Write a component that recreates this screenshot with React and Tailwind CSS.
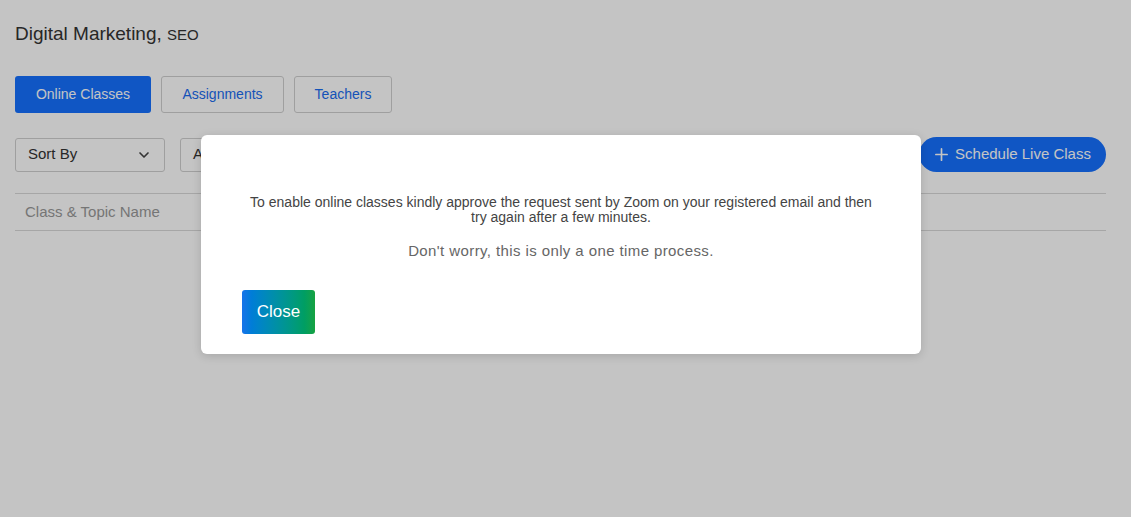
import React from 'react';

const App = () => {
  return (
    <div className="relative min-h-screen h-[517px] bg-white font-['Liberation_Sans',Arial,sans-serif] overflow-hidden">
      {/* Page underneath */}
      <div className="px-[15px] pt-[22px]">
        <h1 className="text-[19px] text-[#333] leading-6">
          Digital Marketing, <span className="text-[15px]">SEO</span>
        </h1>

        <div className="flex gap-[10px] mt-[29px]">
          <button className="w-[136px] h-[37px] rounded-[3px] bg-[#1671ff] text-white text-[14px]">Online Classes</button>
          <button className="w-[123px] h-[37px] rounded-[3px] border border-[#cfcfcf] text-[#1a6cf0] text-[14px]">Assignments</button>
          <button className="w-[98px] h-[37px] rounded-[3px] border border-[#cfcfcf] text-[#1a6cf0] text-[14px]">Teachers</button>
        </div>

        <div className="flex items-center justify-between mt-[24px] pr-[10px]">
          <div className="flex gap-[15px]">
            <div className="w-[150px] h-[34px] rounded-[3px] border border-[#cfcfcf] flex items-center justify-between px-[12px] text-[15px] text-[#333]">
              <span>Sort By</span>
              <svg className="w-4 h-4 text-[#444]" fill="none" stroke="currentColor" viewBox="0 0 24 24">
                <path strokeLinecap="round" strokeLinejoin="round" strokeWidth={2.5} d="M6 9l6 6 6-6" />
              </svg>
            </div>
            <div className="w-[150px] h-[34px] rounded-[3px] border border-[#cfcfcf] flex items-center px-[12px] text-[15px] text-[#333]">
              All
            </div>
          </div>
          <button className="w-[187px] h-[35px] rounded-full bg-[#1671ff] text-white text-[15px] flex items-center justify-center gap-[6px]">
            <svg className="w-[15px] h-[15px]" fill="none" stroke="currentColor" viewBox="0 0 16 16">
              <path strokeLinecap="round" strokeWidth={1.8} d="M8 2v12M2 8h12" />
            </svg>
            Schedule Live Class
          </button>
        </div>

        <div className="mt-[21px] mr-[10px] border-t border-b border-[#d8d8d8] h-[38px] flex items-center px-[10px] text-[15px] text-[#999]">
          Class &amp; Topic Name
        </div>
      </div>

      {/* Overlay */}
      <div className="absolute inset-0 bg-black/[0.23]" />

      {/* Modal */}
      <div className="absolute left-[201px] top-[135px] w-[720px] h-[219px] bg-white rounded-[6px] shadow-[0_2px_10px_rgba(0,0,0,0.15)] px-[41px] pt-[60px]">
        <p className="text-center text-[14px] leading-[15px] text-[#444]">
          To enable online classes kindly approve the request sent by Zoom on your registered email and then try again after a few minutes.
        </p>
        <p className="text-center text-[15px] text-[#666] mt-[17px] leading-[18px] tracking-[0.4px]">
          Don't worry, this is only a one time process.
        </p>
        <button className="mt-[30px] w-[73px] h-[44px] rounded-[3px] bg-gradient-to-r from-[#1673ea] to-[#16a240] text-white text-[17px]">
          Close
        </button>
      </div>
    </div>
  );
};

export default App;
